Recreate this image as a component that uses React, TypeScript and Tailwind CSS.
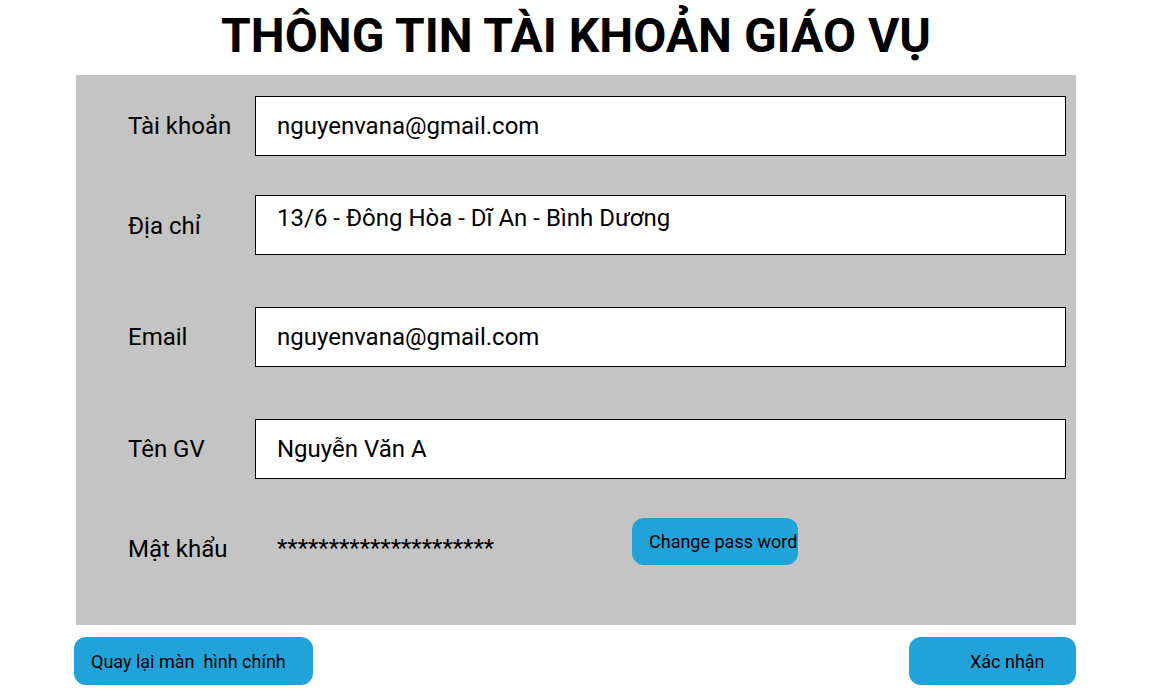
export default function App() {
  const font = { fontFamily: "Roboto, 'Noto Sans', sans-serif" };
  return (
    <div className="w-[1152px] h-[700px] bg-white text-black" style={font}>
      <h1 className="h-[75px] pt-[12px] text-center text-[48px] leading-[48px] font-bold">
        THÔNG TIN TÀI KHOẢN GIÁO VỤ
      </h1>

      <div className="ml-[76px] w-[1000px] h-[550px] bg-[#c4c4c4] pt-[21px] pl-[52px] pr-[10px]">
        <div className="flex items-center h-[60px]">
          <div className="w-[127px] text-[24px]">Tài khoản</div>
          <div className="flex-1 h-[60px] bg-white border border-black flex items-center pl-[21px] text-[24px]">
            nguyenvana@gmail.com
          </div>
        </div>

        <div className="flex items-center h-[60px] mt-[39px]">
          <div className="w-[127px] text-[24px] pt-[1px]">Địa chỉ</div>
          <div className="flex-1 h-[60px] bg-white border border-black pl-[21px] pt-[7px] text-[24px] leading-[30px]">
            13/6 - Đông Hòa - Dĩ An - Bình Dương
          </div>
        </div>

        <div className="flex items-center h-[60px] mt-[52px]">
          <div className="w-[127px] text-[24px]">Email</div>
          <div className="flex-1 h-[60px] bg-white border border-black flex items-center pl-[21px] text-[24px]">
            nguyenvana@gmail.com
          </div>
        </div>

        <div className="flex items-center h-[60px] mt-[52px]">
          <div className="w-[127px] text-[24px]">Tên GV</div>
          <div className="flex-1 h-[60px] bg-white border border-black flex items-center pl-[21px] text-[24px]">
            Nguyễn Văn A
          </div>
        </div>

        <div className="flex items-center h-[47px] mt-[39px]">
          <div className="w-[127px] text-[24px] pt-[14px]">Mật khẩu</div>
          <div className="w-[377px] pl-[22px] text-[24px] pt-[12px]">*********************</div>
          <button className="h-[47px] w-[166px] rounded-[12px] bg-[#21a3d9] text-[18px] pl-[17px] text-left">
            Change pass word
          </button>
        </div>
      </div>

      <div className="flex justify-between pl-[74px] w-[1076px] mt-[12px]">
        <button className="h-[48px] w-[239px] rounded-[12px] bg-[#21a3d9] text-[18px] pl-[17px] text-left">
          Quay lại màn&nbsp; hình chính
        </button>
        <button className="h-[48px] w-[167px] rounded-[12px] bg-[#21a3d9] text-[18px] pl-[61px] text-left">
          Xác nhận
        </button>
      </div>
    </div>
  );
}
